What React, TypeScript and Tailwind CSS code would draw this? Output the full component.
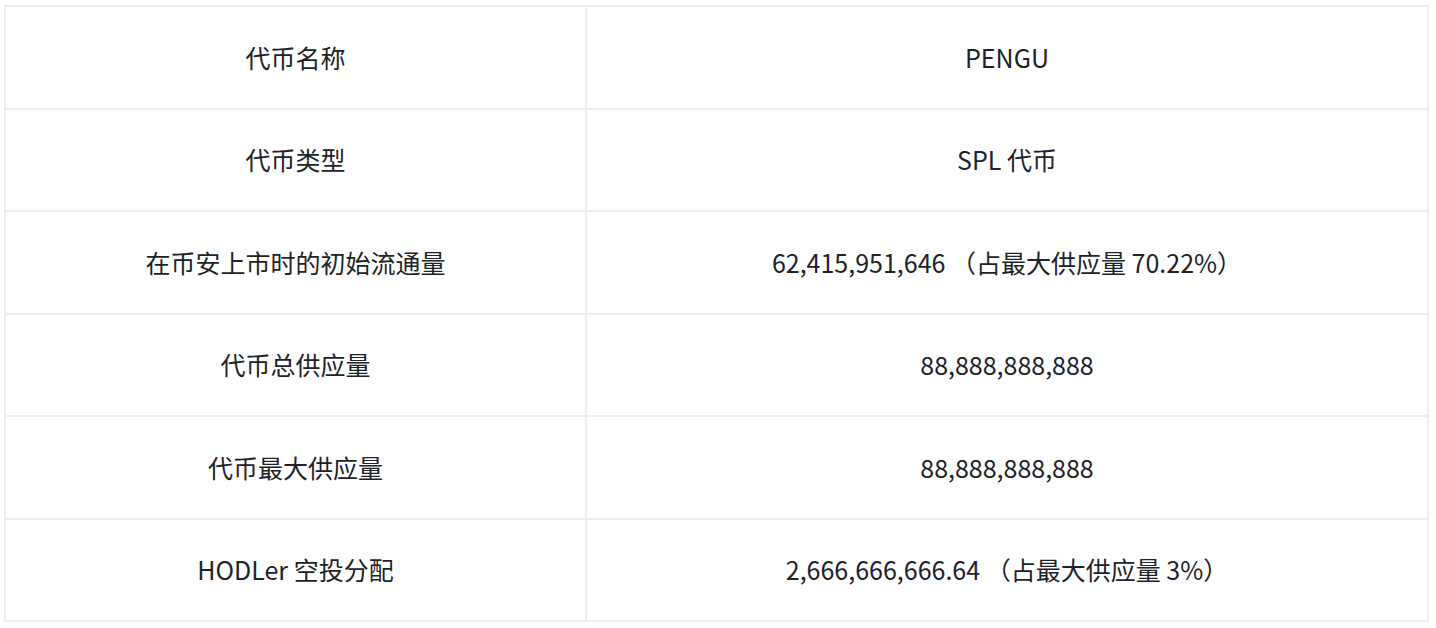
const rows: [string, string][] = [
  ["代币名称", "PENGU"],
  ["代币类型", "SPL 代币"],
  ["在币安上市时的初始流通量", "62,415,951,646 （占最大供应量 70.22%）"],
  ["代币总供应量", "88,888,888,888"],
  ["代币最大供应量", "88,888,888,888"],
  ["HODLer 空投分配", "2,666,666,666.64 （占最大供应量 3%）"],
];

export default function App() {
  return (
    <div className="w-[1436px] h-[628px] bg-white pt-[5px] pl-[4px]">
      <div
        className="w-[1425px] h-[617px] flex flex-col border-2 border-[#eceef2] text-[#1e2329] text-[25px]"
        style={{ fontFamily: '"Noto Sans CJK SC", sans-serif' }}
      >
        {rows.map(([label, value], i) => (
          <div
            key={label}
            className={`flex flex-1 ${i < rows.length - 1 ? "border-b-2 border-[#eceef2]" : ""}`}
          >
            <div className="w-[581px] shrink-0 flex items-center justify-center border-r-2 border-[#eceef2]">
              {label}
            </div>
            <div className="flex-1 flex items-center justify-center">{value}</div>
          </div>
        ))}
      </div>
    </div>
  );
}
